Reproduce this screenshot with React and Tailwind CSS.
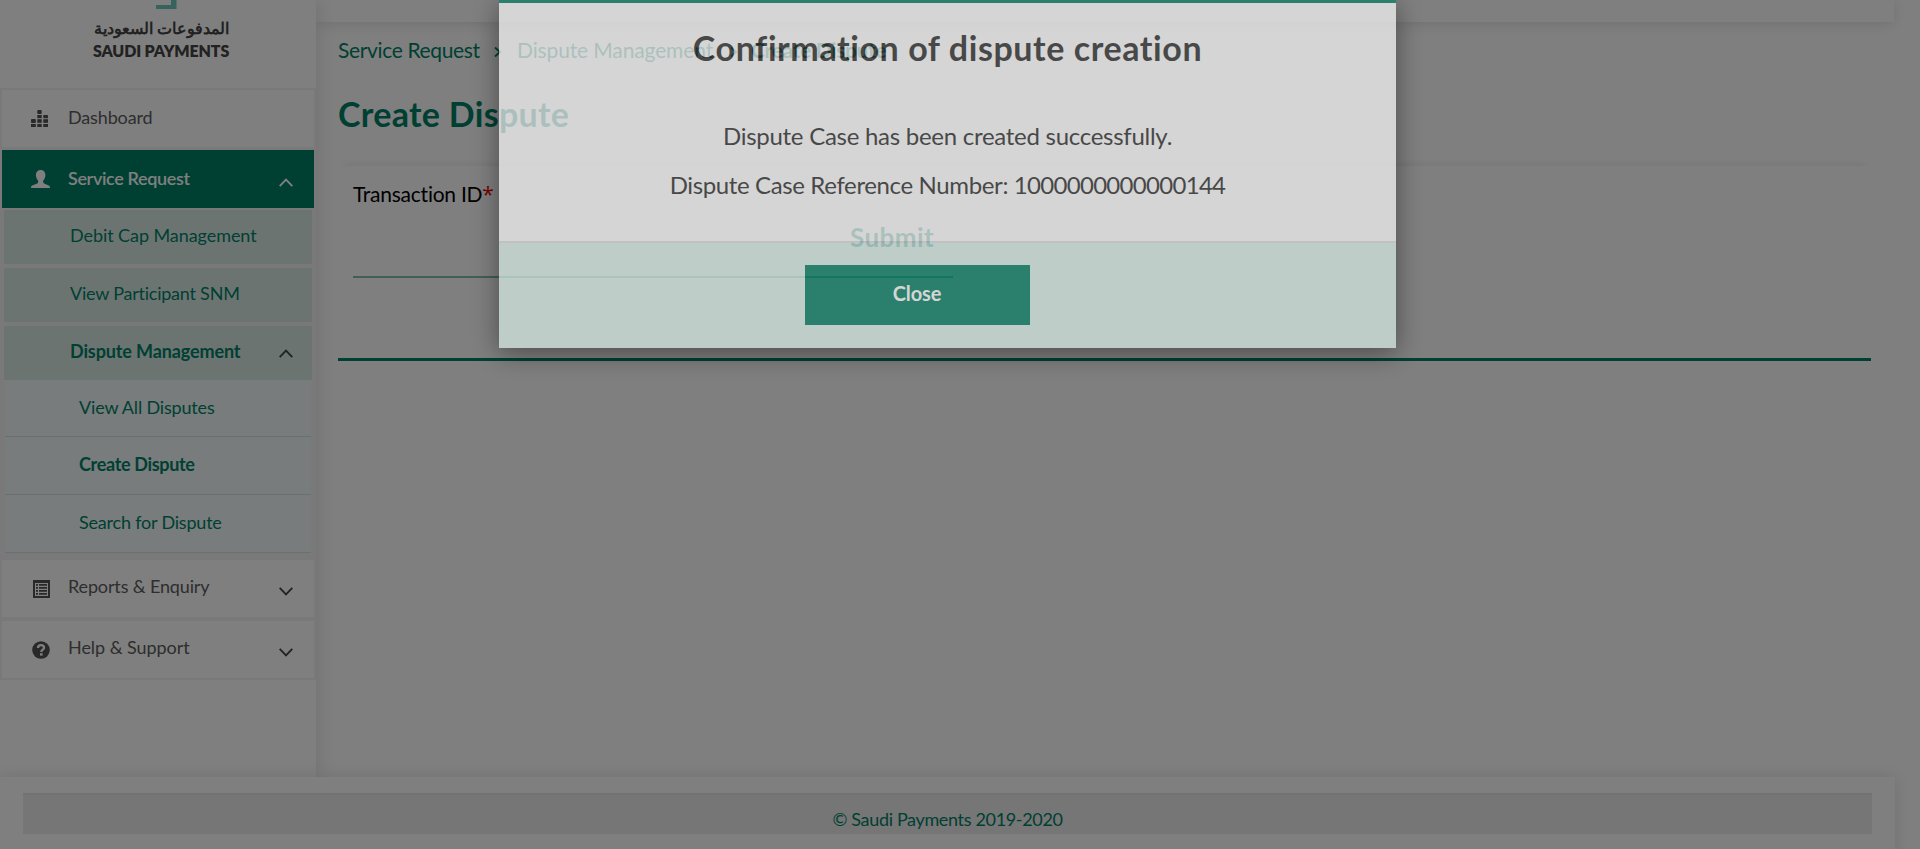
function Chevron({ up, className }) {
  return (
    <svg width="14" height="9" viewBox="0 0 14 9" fill="none" stroke="currentColor" strokeWidth="1.9" className={className}>
      <path d={up ? "M0.7 8.2 7 1.6 13.3 8.2" : "M0.7 0.8 7 7.4 13.3 0.8"} />
    </svg>
  );
}

function BarsIcon() {
  return (
    <svg width="17" height="17" viewBox="0 0 17 17" fill="currentColor">
      <rect x="6.3" y="0" width="4.4" height="4" rx="1" />
      <rect x="6.3" y="5" width="4.4" height="3.2" />
      <rect x="12.3" y="5" width="4.7" height="3.2" rx="0.6" />
      <rect x="0" y="9" width="4.8" height="4" rx="1" />
      <rect x="6.3" y="9.2" width="4.4" height="3.6" />
      <rect x="12.3" y="9.2" width="4.7" height="3.6" />
      <rect x="0" y="14" width="4.8" height="3" />
      <rect x="6.3" y="14" width="4.4" height="3" />
      <rect x="12.3" y="14" width="4.7" height="3" />
    </svg>
  );
}

function UserIcon() {
  return (
    <svg width="19" height="18" viewBox="0 0 19 18" fill="currentColor">
      <path d="M9.7 0C12.8 0 14.4 2.1 14.4 5c0 2.100-.8 4.300-2.200 5.500v1.700c0 .6.300 1 .9 1.300l4.600 2.100c.8.400 1.300 1 1.300 2.400H0c0-1.400.5-2 1.300-2.400l4.900-2.100c.6-.3.900-.7.900-1.300v-1.700C5.700 9.300 4.900 7.100 4.900 5c0-2.900 1.700-5 4.800-5Z" />
    </svg>
  );
}

function ListIcon() {
  return (
    <svg width="17" height="18" viewBox="0 0 17 18" fill="currentColor">
      <path fillRule="evenodd" d="M0 0h17v18H0ZM2 3v13h13V3Z" />
      <path d="M3 4h2v1.800H3ZM6 4h8v1.800H6ZM3 7h2v1.800H3ZM6 7h8v1.800H6ZM3 10h2v1.800H3ZM6 10h8v1.800H6ZM3 13h2v1.800H3ZM6 13h8v1.800H6Z" />
    </svg>
  );
}

function HelpIcon() {
  return (
    <svg width="18" height="18" viewBox="0 0 18 18">
      <circle cx="9" cy="9" r="8.800" fill="currentColor" />
      <path d="M6 7.100C6 5 7.200 4.200 9 4.200s3 .9 3 2.500c0 2-2.700 2-2.700 4.300" fill="none" stroke="#fff" strokeWidth="2.300" />
      <rect x="8" y="12.200" width="2.600" height="2.400" fill="#fff" />
    </svg>
  );
}

function MenuItem({ icon, label, labelClass, chevron, active }) {
  return (
    <div className={`mx-[2px] flex items-center pr-[21px] ${active ? "h-[58px] bg-[#008066] text-white" : "h-[57px] bg-white text-[#5c5c5c]"}`}>
      <span className={`flex w-[66px] pl-[29px] ${active ? "" : "text-[#525252]"}`}>{icon}</span>
      <span className={`flex-1 whitespace-nowrap text-[18px] ${labelClass}`}>{label}</span>
      {chevron && <Chevron up={chevron === "up"} className={`mt-[6px] ${active ? "" : "text-[#444]"}`} />}
    </div>
  );
}

function SubItem({ label, className, chevron }) {
  return (
    <div className="mx-[4px] flex h-[54px] items-center bg-[#d9e9e5] pr-[19px] pl-[66px] text-[#008066]">
      <span className={`flex-1 whitespace-nowrap pb-[4px] text-[18px] ${className}`}>{label}</span>
      {chevron && <Chevron up className="text-[#444]" />}
    </div>
  );
}

function LeafItem({ label, className, height = "h-[58px]" }) {
  return (
    <div className={`mx-[5px] flex items-center border-b border-[#cfe3df] bg-[#f0f8f8] pl-[74px] text-[18px] text-[#008066] ${height}`}>
      <span className={`whitespace-nowrap pb-[2px] ${className}`}>{label}</span>
    </div>
  );
}

function Sidebar() {
  return (
    <aside className="relative h-[777px] w-[316px] shrink-0 bg-white shadow-[0_0_20px_rgba(0,0,0,0.14)]">
      <div className="flex h-[88px] flex-col items-start pl-[93px]">
        <svg width="21" height="9" viewBox="0 0 21 9" className="ml-[63px]">
          <path d="M15 0h5.500v9H0V5h15Z" fill="#6fc4bd" />
        </svg>
        <p dir="rtl" className="mt-[7px] h-[26px] w-[136px] whitespace-nowrap text-[16px] leading-[24px] font-bold text-[#444]">المدفوعات السعودية</p>
        <p className="whitespace-nowrap text-[16px] leading-[18px] font-extrabold tracking-[-0.15px] text-[#444]">SAUDI PAYMENTS</p>
      </div>
      <nav className="bg-[#f2f2f2] pt-[2px] pb-[2px]">
        <MenuItem icon={<BarsIcon />} label="Dashboard" labelClass="pb-[2px] tracking-[-0.15px]" />
        <div className="h-[3px]" />
        <MenuItem active icon={<UserIcon />} label="Service Request" labelClass="pb-[2px] font-semibold tracking-[-0.36px]" chevron="up" />
        <div className="flex flex-col gap-[4px] pt-[2px]">
          <SubItem label="Debit Cap Management" className="tracking-[-0.07px]" />
          <SubItem label="View Participant SNM" className="tracking-[-0.23px]" />
          <SubItem label="Dispute Management" className="font-bold tracking-[-0.12px]" chevron />
        </div>
        <div className="flex flex-col">
          <LeafItem label="View All Disputes" className="tracking-[-0.17px]" height="h-[57px]" />
          <LeafItem label="Create Dispute" className="font-bold tracking-[-0.33px]" />
          <LeafItem label="Search for Dispute" className="tracking-[-0.2px]" />
        </div>
        <div className="h-[7px]" />
        <MenuItem icon={<span className="pl-[2px]"><ListIcon /></span>} label="Reports & Enquiry" labelClass="pb-[4px] tracking-[-0.14px]" chevron="down" />
        <div className="h-[4px]" />
        <MenuItem icon={<span className="pl-px"><HelpIcon /></span>} label="Help & Support" labelClass="pb-[4px] tracking-[-0.05px]" chevron="down" />
      </nav>
    </aside>
  );
}

function Crumb({ children, className }) {
  return <span className={`whitespace-nowrap ${className}`}>{children}</span>;
}

function CrumbArrow() {
  return (
    <svg width="8" height="12" viewBox="0 0 8 12" fill="none" stroke="currentColor" strokeWidth="1.900" className="mt-[3px]">
      <path d="M1 1.500 6 6 1 10.500" />
    </svg>
  );
}

function Content() {
  return (
    <div className="flex min-w-0 flex-1 flex-col">
      <header className="mr-[26px] h-[22px] shrink-0 bg-white shadow-[0_2px_14px_rgba(0,0,0,0.12)]" />
      <main className="flex flex-col pr-[49px] pl-[22px] text-[#008066]">
        <div className="mt-[14px] flex h-[28px] items-center text-[21px]">
          <Crumb className="w-[156px] tracking-[-0.35px]">Service Request</Crumb>
          <CrumbArrow />
          <Crumb className="ml-[15px] w-[213px] tracking-[-0.13px]">Dispute Management</Crumb>
          <CrumbArrow />
          <Crumb className="ml-[13px] font-bold tracking-[-0.35px]">Create Dispute</Crumb>
        </div>
        <h1 className="mt-[29px] h-[42px] text-[34px] leading-[42px] font-bold tracking-[0.3px] whitespace-nowrap">Create Dispute</h1>
        <section className="mt-[31px] h-[195px] border-b-[3px] border-[#008066] pl-[15px] shadow-[0_-8px_8px_-6px_rgba(0,0,0,0.07)]">
          <div className="flex h-[110px]">
            <p className="pt-[14px] text-[21px] leading-[28px] tracking-[-0.24px] whitespace-nowrap text-black">
              Transaction ID<span className="font-['Open_Sans'] leading-[20px] text-[#f00000]">*</span>
            </p>
          </div>
          <div className="-mt-[55px] flex h-[32px] items-center pl-[497px]">
            <span className="text-[26px] leading-[32px] font-bold tracking-[0.42px]">Submit</span>
          </div>
          <div className="mt-[23px] h-[2px] w-[600px] bg-[#80bfb2]" />
        </section>
      </main>
    </div>
  );
}

function Modal() {
  return (
    <div className="fixed inset-0 flex items-start pl-[499px]">
      <div className="shadow-[0_5px_26px_rgba(0,0,0,0.42)]">
        <div className="flex h-[348px] w-[897px] flex-col opacity-[0.67]">
          <div className="flex h-[241px] flex-col items-center border-t-[3px] border-[#008063] bg-white text-[#2e2e2e]">
            <h2 className="mt-[23px] text-[34px] leading-[44px] font-bold tracking-[0.58px] whitespace-nowrap">Confirmation of dispute creation</h2>
            <p className="mt-[50px] text-[24px] leading-[32px] tracking-[-0.27px] whitespace-nowrap">Dispute Case has been created successfully.</p>
            <p className="mt-[17px] text-[24px] leading-[32px] tracking-[-0.37px] whitespace-nowrap">
              Dispute Case Reference Number: <span className="tracking-[-0.7px]">1000000000000144</span>
            </p>
          </div>
          <div className="flex flex-1 border-t-2 border-[#e2e2e2] bg-[#def3ee] pt-[22px] pl-[306px]">
            <button className="h-[60px] w-[225px] bg-[#008063] pr-px pb-[4px] text-[20px] font-bold tracking-[-0.1px] text-white">Close</button>
          </div>
        </div>
      </div>
    </div>
  );
}

export default function App() {
  return (
    <div className="h-[849px] w-[1920px] overflow-hidden bg-white font-[Lato,'Open_Sans',sans-serif]">
      <div className="flex h-[777px]">
        <Sidebar />
        <Content />
      </div>
      <footer className="relative h-[90px] w-[1895px] bg-white pt-[16px] pr-[23px] pl-[23px] shadow-[0_0_16px_rgba(0,0,0,0.12)]">
        <div className="flex h-[41px] justify-center border-t-2 border-[#e4e4e4] bg-[#ececec] text-[#008066]">
          <p className="mt-[11px] text-[18px] leading-[26px] tracking-[-0.34px] whitespace-nowrap">© Saudi Payments 2019-2020</p>
        </div>
      </footer>
      <div className="fixed inset-0 bg-black/50" />
      <Modal />
    </div>
  );
}
